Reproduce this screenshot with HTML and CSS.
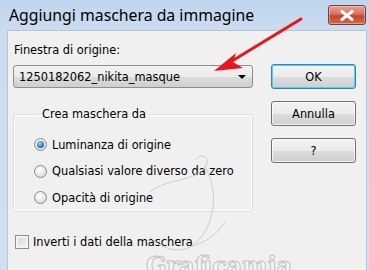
FILE: index.html
```html
<!DOCTYPE html>
<html lang="it">
<head>
<meta charset="utf-8">
<title>Aggiungi maschera da immagine</title>
<link rel="stylesheet" href="styles.css">
</head>
<body>
<div class="window">
  <div class="titlebar">
    <span class="title">Aggiungi maschera da immagine</span>
    <button class="close" aria-label="Chiudi">
      <svg width="14" height="11" viewBox="0 0 14 11"><path d="M2 1.5 L12 9.5 M12 1.5 L2 9.5" stroke="#ffffff" stroke-width="3" stroke-linecap="round" fill="none"/></svg>
    </button>
  </div>
  <div class="client">
    <div class="main">
      <div class="left">
        <label class="label">Finestra di origine:</label>
        <div class="combo">
          <span class="combo-text">1250182062_nikita_masque</span>
          <span class="combo-arrow"></span>
        </div>
        <fieldset class="group">
          <legend>Crea maschera da</legend>
          <div class="radio-row"><span class="radio checked"></span><span>Luminanza di origine</span></div>
          <div class="radio-row"><span class="radio"></span><span>Qualsiasi valore diverso da zero</span></div>
          <div class="radio-row"><span class="radio"></span><span>Opacità di origine</span></div>
        </fieldset>
      </div>
      <div class="buttons">
        <button class="btn default">OK</button>
        <button class="btn">Annulla</button>
        <button class="btn">?</button>
      </div>
    </div>
    <div class="check-row"><span class="checkbox"></span><span>Inverti i dati della maschera</span></div>
  </div>
</div>
<svg class="arrow" width="369" height="270" viewBox="0 0 369 270">
  <path d="M301 19 L232 61" stroke="#e8161b" stroke-width="3" fill="none" stroke-linecap="round"/>
  <path d="M214 71 L236 53 L233 62 L243 68 Z" fill="#e8161b"/>
</svg>
<svg class="swirl" width="369" height="270" viewBox="0 0 369 270">
  <path d="M150 192 C170 177 195 182 205 167 C212 157 200 152 196 160 M205 167 C220 192 215 232 190 247 C175 254 160 247 150 237 M190 247 C205 242 215 237 225 222" stroke="#cccccc" stroke-width="1" fill="none"/>
</svg>
<div class="watermark">Graficamia</div>
</body>
</html>
```
FILE: styles.css
```css
html, body {
  margin: 0;
  padding: 0;
  width: 369px;
  height: 270px;
  overflow: hidden;
  background: #f0f0f0;
}

.window {
  width: 369px;
  height: 270px;
  display: flex;
  flex-direction: column;
  background: linear-gradient(180deg, #bfd5ed 0px, #cbdcf0 30px, #d0e0f1 270px);
  font-family: "DejaVu Sans", sans-serif;
  font-size: 11.4px;
  color: #000;
}

.titlebar {
  height: 30px;
  flex: none;
  display: flex;
  align-items: flex-start;
  justify-content: space-between;
  box-sizing: border-box;
}

.title {
  font-family: "Noto Sans", sans-serif;
  font-size: 15.8px;
  line-height: 18px;
  padding: 6px 0 0 9px;
  color: #000;
}

.close {
  margin: 5px 3px 0 0;
  width: 38px;
  height: 20px;
  border: 1px solid #7d3c34;
  border-radius: 3px;
  background: linear-gradient(180deg, #e8a293 0%, #d9725f 45%, #c4452c 55%, #d16b4d 100%);
  box-shadow: inset 0 0 0 1px rgba(255,255,255,0.35);
  padding: 0;
  display: flex;
  align-items: center;
  justify-content: center;
}

.client {
  flex: 1;
  margin: 0 2px 0 7px;
  border: 1px solid #b5c6d8;
  border-bottom: none;
  background: #f0f0f0;
  padding: 9px 0 0 5px;
  display: flex;
  flex-direction: column;
}

.main {
  display: flex;
  gap: 18px;
}

.left {
  width: 240px;
  display: flex;
  flex-direction: column;
}

.label {
  line-height: 15px;
  height: 15px;
  padding: 3px 0 0 1px;
}

.combo {
  margin-top: 7px;
  height: 23px;
  box-sizing: border-box;
  border: 1px solid #8e8f8f;
  border-radius: 3px;
  background: linear-gradient(180deg, #f2f2f2 0%, #ebebeb 50%, #dddddd 51%, #cfcfcf 100%);
  display: flex;
  align-items: center;
  justify-content: space-between;
  padding: 0 6px 0 5px;
}

.combo-arrow {
  width: 0;
  height: 0;
  border-left: 4px solid transparent;
  border-right: 4px solid transparent;
  border-top: 4px solid #000;
}

.group {
  margin: 19px 0 0 0;
  padding: 14px 0 10px 20px;
  border: 1px solid #d5dfe5;
  border-radius: 3px;
  box-shadow: inset 0 0 0 1px #ffffff;
  height: 105px;
  box-sizing: border-box;
  display: flex;
  flex-direction: column;
  gap: 9.5px;
}

.group legend {
  padding: 0 3px;
  margin-left: 5px;
  line-height: 15px;
}

.radio-row {
  display: flex;
  align-items: center;
  gap: 5px;
  height: 17px;
}

.radio {
  width: 13px;
  height: 13px;
  box-sizing: border-box;
  border-radius: 50%;
  border: 1px solid #8a8a8a;
  background: radial-gradient(circle at 40% 35%, #ffffff 0%, #e8e8e8 50%, #cfcfcf 100%);
  display: flex;
  align-items: center;
  justify-content: center;
}

.radio.checked::after {
  content: "";
  width: 7px;
  height: 7px;
  border-radius: 50%;
  background: radial-gradient(circle at 40% 35%, #9fd8fb 0%, #2c7fc1 55%, #0d3b75 100%);
}

.buttons {
  padding-top: 24px;
  width: 85px;
  display: flex;
  flex-direction: column;
  gap: 12px;
}

.btn {
  height: 25px;
  box-sizing: border-box;
  border: 1px solid #707070;
  border-radius: 3px;
  background: linear-gradient(180deg, #f2f2f2 0%, #ebebeb 50%, #dddddd 51%, #cfcfcf 100%);
  box-shadow: inset 0 0 0 1px rgba(255,255,255,0.7);
  font-family: "DejaVu Sans", sans-serif;
  font-size: 11.4px;
  color: #000;
  padding: 0;
}

.btn.default {
  border-color: #3c7fb1;
  box-shadow: inset 0 0 0 1px #48d2f8;
}

.check-row {
  margin-top: 22px;
  padding-left: 2px;
  display: flex;
  align-items: center;
  gap: 4px;
  height: 16px;
}

.checkbox {
  width: 14px;
  height: 14px;
  box-sizing: border-box;
  border: 1px solid #8e8f8f;
  background: linear-gradient(135deg, #d7d7d7 0%, #f3f3f3 100%);
  box-shadow: inset 0 0 0 2px #f4f4f4;
}

.arrow, .swirl {
  position: absolute;
  left: 0;
  top: 0;
  pointer-events: none;
}

.watermark {
  position: absolute;
  left: 146px;
  top: 252px;
  font-family: "DejaVu Serif", serif;
  font-weight: bold;
  font-size: 24px;
  line-height: 28px;
  color: #f4f4f4;
  -webkit-text-stroke: 1px #c4c4c4;
}
```
